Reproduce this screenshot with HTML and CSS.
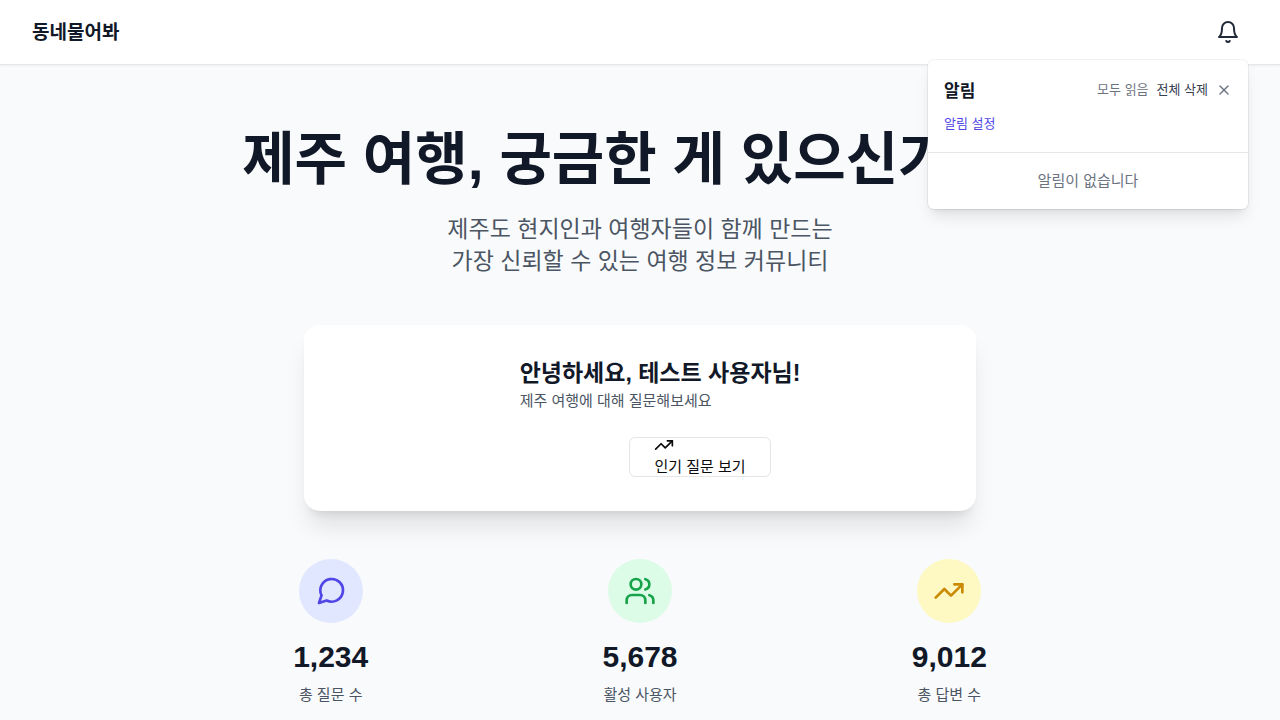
FILE: index.html
```html
<!DOCTYPE html>
<html lang="ko">
<head>
<meta charset="utf-8">
<meta name="viewport" content="width=device-width, initial-scale=1">
<title>동네물어봐</title>
<link rel="stylesheet" href="styles.css">
</head>
<body>
<header class="topbar">
  <a class="brand" href="#">동네물어봐</a>
  <div class="notify">
    <button class="bell" type="button" aria-label="알림" aria-expanded="true">
      <svg class="icon icon-md" viewBox="0 0 24 24"><path d="M6 8a6 6 0 0 1 12 0c0 7 3 9 3 9H3s3-2 3-9"/><path d="M10.3 21a1.94 1.94 0 0 0 3.4 0"/></svg>
    </button>
    <section class="panel">
      <div class="panel-head">
        <div class="panel-row">
          <h2 class="panel-title">알림</h2>
          <div class="panel-actions">
            <button class="text-btn muted" type="button">모두 읽음</button>
            <button class="text-btn" type="button">전체 삭제</button>
            <button class="close" type="button" aria-label="닫기">
              <svg class="icon icon-xs" viewBox="0 0 24 24"><path d="M18 6 6 18"/><path d="m6 6 12 12"/></svg>
            </button>
          </div>
        </div>
        <a class="settings" href="#">알림 설정</a>
      </div>
      <p class="empty">알림이 없습니다</p>
    </section>
  </div>
</header>
<main class="hero">
  <h1 class="headline">제주 여행, 궁금한 게 있으신가요?</h1>
  <p class="lead">제주도 현지인과 여행자들이 함께 만드는<br>가장 신뢰할 수 있는 여행 정보 커뮤니티</p>
  <section class="card">
    <div class="greeting">
      <div>
        <h2 class="hello">안녕하세요, 테스트 사용자님!</h2>
        <p class="hint">제주 여행에 대해 질문해보세요</p>
      </div>
    </div>
    <div class="card-actions">
      <button class="popular" type="button">
        <span class="popular-body">
          <svg class="icon icon-sm" viewBox="0 0 24 24"><path d="M22 7 13.5 15.5 8.5 10.5 2 17"/><path d="M16 7h6v6"/></svg>
          인기 질문 보기
        </span>
      </button>
    </div>
  </section>
  <section class="stats">
    <div class="stat">
      <div class="badge indigo"><svg class="icon icon-lg" viewBox="0 0 24 24"><path d="m3 21 1.9-5.7a8.5 8.5 0 1 1 3.8 3.8z"/></svg></div>
      <div class="value">1,234</div>
      <div class="label">총 질문 수</div>
    </div>
    <div class="stat">
      <div class="badge green"><svg class="icon icon-lg" viewBox="0 0 24 24"><path d="M16 21v-2a4 4 0 0 0-4-4H6a4 4 0 0 0-4 4v2"/><circle cx="9" cy="7" r="4"/><path d="M22 21v-2a4 4 0 0 0-3-3.87"/><path d="M16 3.13a4 4 0 0 1 0 7.75"/></svg></div>
      <div class="value">5,678</div>
      <div class="label">활성 사용자</div>
    </div>
    <div class="stat">
      <div class="badge yellow"><svg class="icon icon-lg" viewBox="0 0 24 24"><path d="M22 7 13.5 15.5 8.5 10.5 2 17"/><path d="M16 7h6v6"/></svg></div>
      <div class="value">9,012</div>
      <div class="label">총 답변 수</div>
    </div>
  </section>
</main>
</body>
</html>
```
FILE: styles.css
```css
* { box-sizing: border-box; margin: 0; padding: 0; }
body {
  background: #f9fafb;
  color: #111827;
  font-family: "Liberation Sans", "Noto Sans CJK KR", sans-serif;
  font-size: 15px;
  line-height: 24px;
}
button { font: inherit; color: inherit; background: none; border: 0; cursor: pointer; }
a { text-decoration: none; }
.icon { display: block; fill: none; stroke: currentColor; stroke-width: 2; stroke-linecap: round; stroke-linejoin: round; }
.icon-xs { width: 16px; height: 16px; }
.icon-sm { width: 20px; height: 20px; }
.icon-md { width: 24px; height: 24px; }
.icon-lg { width: 32px; height: 32px; }

.topbar {
  display: flex;
  align-items: center;
  justify-content: space-between;
  padding: 12px 32px;
  background: #fff;
  border-bottom: 1px solid #e5e7eb;
  box-shadow: 0 1px 2px rgba(0, 0, 0, 0.05);
}
.brand { padding-top: 2px; color: #111827; font-size: 19px; line-height: 28px; font-weight: 700; }
.notify { position: relative; }
.bell { display: block; padding: 8px; color: #1f2937; }
.panel {
  position: absolute;
  z-index: 10;
  top: 48px;
  right: 0;
  width: 320px;
  background: #fff;
  border-radius: 6px;
  box-shadow: 0 0 0 1px rgba(0, 0, 0, 0.05), 0 10px 15px -3px rgba(0, 0, 0, 0.1), 0 4px 6px -4px rgba(0, 0, 0, 0.1);
}
.panel-head { padding: 16px; border-bottom: 1px solid #e5e7eb; }
.panel-row { display: flex; align-items: center; justify-content: space-between; margin-bottom: 8px; }
.panel-title { padding-top: 4px; font-size: 17px; line-height: 24px; font-weight: 600; }
.panel-actions { display: flex; align-items: center; gap: 8px; }
.text-btn { font-size: 13px; line-height: 20px; color: #374151; }
.text-btn.muted { color: #6b7280; }
.close { color: #6b7280; }
.settings { display: block; font-size: 13px; color: #4f46e5; }
.empty { padding: 16px; text-align: center; color: #6b7280; }

.hero { max-width: 960px; margin: 0 auto; padding: 64px 32px 13px; text-align: center; }
.headline { margin-bottom: 24px; font-size: 57px; line-height: 60px; font-weight: 700; }
.lead { margin-bottom: 48px; font-size: 23px; line-height: 32px; color: #4b5563; }
.card {
  max-width: 672px;
  margin: 0 auto 48px;
  padding: 32px 32px 34px;
  background: #fff;
  border-radius: 16px;
  box-shadow: 0 20px 25px -5px rgba(0, 0, 0, 0.1), 0 8px 10px -6px rgba(0, 0, 0, 0.1);
}
.greeting { display: flex; justify-content: center; padding-left: 40px; margin-bottom: 24px; text-align: left; }
.hello { font-size: 23px; line-height: 32px; font-weight: 600; }
.hint { color: #4b5563; }
.card-actions { display: flex; justify-content: center; padding-left: 120px; }
.popular {
  display: flex;
  align-items: center;
  height: 40px;
  padding: 0 24px;
  border: 1px solid #e5e5e5;
  border-radius: 6px;
  color: #0a0a0a;
  text-align: left;
}
.stats { display: grid; grid-template-columns: repeat(3, 1fr); gap: 32px; }
.stat { display: flex; flex-direction: column; align-items: center; }
.badge { display: flex; align-items: center; justify-content: center; width: 64px; height: 64px; margin-bottom: 16px; border-radius: 50%; }
.indigo { background: #e0e7ff; color: #4f46e5; }
.green { background: #dcfce7; color: #16a34a; }
.yellow { background: #fef9c3; color: #ca8a04; }
.value { margin-bottom: 8px; font-size: 30px; line-height: 36px; font-weight: 700; }
.label { color: #4b5563; }
```
